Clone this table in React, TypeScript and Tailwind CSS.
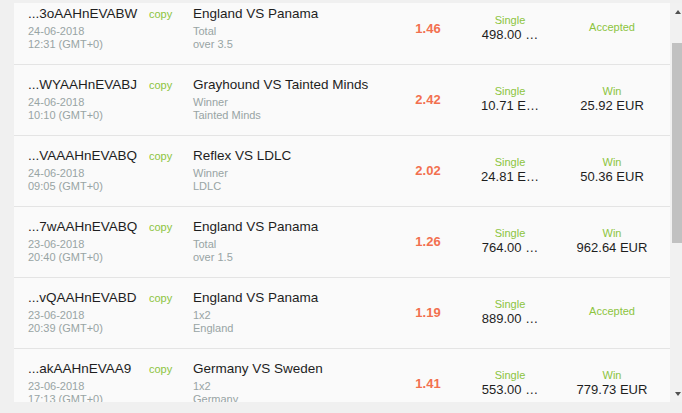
import React from "react";

type Row = {
  id: string;
  date: string;
  time: string;
  match: string;
  market: string;
  pick: string;
  odds: string;
  stake: string;
  status: "Accepted" | "Win";
  win?: string;
};

const rows: Row[] = [
  { id: "...3oAAHnEVABW", date: "24-06-2018", time: "12:31 (GMT+0)", match: "England VS Panama", market: "Total", pick: "over 3.5", odds: "1.46", stake: "498.00 …", status: "Accepted" },
  { id: "...WYAAHnEVABJ", date: "24-06-2018", time: "10:10 (GMT+0)", match: "Grayhound VS Tainted Minds", market: "Winner", pick: "Tainted Minds", odds: "2.42", stake: "10.71 E…", status: "Win", win: "25.92 EUR" },
  { id: "...VAAAHnEVABQ", date: "24-06-2018", time: "09:05 (GMT+0)", match: "Reflex VS LDLC", market: "Winner", pick: "LDLC", odds: "2.02", stake: "24.81 E…", status: "Win", win: "50.36 EUR" },
  { id: "...7wAAHnEVABQ", date: "23-06-2018", time: "20:40 (GMT+0)", match: "England VS Panama", market: "Total", pick: "over 1.5", odds: "1.26", stake: "764.00 …", status: "Win", win: "962.64 EUR" },
  { id: "...vQAAHnEVABD", date: "23-06-2018", time: "20:39 (GMT+0)", match: "England VS Panama", market: "1x2", pick: "England", odds: "1.19", stake: "889.00 …", status: "Accepted" },
  { id: "...akAAHnEVAA9", date: "23-06-2018", time: "17:13 (GMT+0)", match: "Germany VS Sweden", market: "1x2", pick: "Germany", odds: "1.41", stake: "553.00 …", status: "Win", win: "779.73 EUR" },
];

function BetRow({ r }: { r: Row }) {
  return (
    <div className="flex h-[71px] border-b border-[#e4e4e4] pl-[14px]">
      <div className="w-[165px] shrink-0 pt-[12px]">
        <div className="flex items-baseline">
          <span className="w-[121px] shrink-0 text-[13.5px] leading-[16px] text-[#1e1e1e] whitespace-nowrap">{r.id}</span>
          <span className="text-[11px] leading-[16px] text-[#8cc43e]">copy</span>
        </div>
        <div className="mt-[3px] text-[11px] leading-[13px] text-[#98a4a4]">{r.date}</div>
        <div className="text-[11px] leading-[13px] text-[#98a4a4]">{r.time}</div>
      </div>
      <div className="w-[202px] shrink-0 pt-[12px]">
        <div className="text-[13.5px] leading-[16px] text-[#1e1e1e] whitespace-nowrap">{r.match}</div>
        <div className="mt-[3px] text-[11px] leading-[13px] text-[#98a4a4]">{r.market}</div>
        <div className="text-[11px] leading-[13px] text-[#98a4a4]">{r.pick}</div>
      </div>
      <div className="w-[66px] shrink-0 pt-[27px] text-center text-[13px] leading-[15px] font-bold text-[#f2704f]">
        {r.odds}
      </div>
      <div className="w-[98px] shrink-0 pt-[20px] text-center">
        <div className="text-[11px] leading-[13px] text-[#8cc43e]">Single</div>
        <div className="text-[13px] leading-[15px] text-[#1e1e1e] whitespace-nowrap">{r.stake}</div>
      </div>
      <div className="w-[106px] shrink-0 text-center">
        {r.status === "Accepted" ? (
          <div className="pt-[27px] text-[11px] leading-[13px] text-[#8cc43e]">Accepted</div>
        ) : (
          <div className="pt-[20px]">
            <div className="text-[11px] leading-[13px] text-[#8cc43e]">Win</div>
            <div className="text-[13px] leading-[15px] text-[#1e1e1e] whitespace-nowrap">{r.win}</div>
          </div>
        )}
      </div>
    </div>
  );
}

export default function App() {
  return (
    <div
      className="flex w-[682px] h-[413px] overflow-hidden bg-[#f0f0f0] pt-[3px] pl-[14px]"
      style={{ fontFamily: '"Liberation Sans", Arial, sans-serif' }}
    >
      <div className="w-[656px] h-[399px] shrink-0 overflow-hidden bg-[#fafafa]">
        <div className="-mt-[9px]">
          {rows.map((r, i) => (
            <BetRow key={i} r={r} />
          ))}
        </div>
      </div>
      <div className="flex w-[12px] h-[399px] shrink-0 flex-col bg-[#f1f1f1]">
        <div className="flex h-[17px] items-center pl-[5px]">
          <div className="h-0 w-0 border-x-[3.5px] border-x-transparent border-b-[4px] border-b-[#505050]" />
        </div>
        <div className="h-[23px]" />
        <div className="ml-[2px] h-[200px] w-[10px] bg-[#c1c1c1]" />
        <div className="flex-1" />
        <div className="flex h-[17px] items-center pl-[5px]">
          <div className="h-0 w-0 border-x-[3.5px] border-x-transparent border-t-[4px] border-t-[#505050]" />
        </div>
      </div>
    </div>
  );
}
